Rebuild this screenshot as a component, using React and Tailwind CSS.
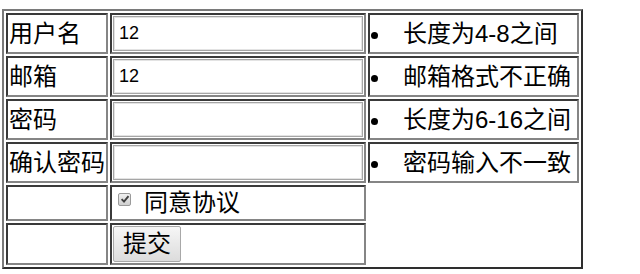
// App.jsx — registration form laid out as an old-style bordered table

const cell =
  "border-2 border-t-[#3a3a3a] border-l-[#3a3a3a] border-r-[#858585] border-b-[#858585] p-[1px] flex items-center"

function Label({ children }) {
  return <div className={`${cell} text-[24px] leading-[28px] whitespace-nowrap`}>{children}</div>
}

function Field({ value }) {
  return (
    <div className={cell}>
      <input
        type="text"
        defaultValue={value}
        className="w-full h-full border border-[#a6a6a6] shadow-[inset_0_0_0_1px_#e3e3e3] bg-white pl-[5px] text-[18px] font-['Liberation_Sans',sans-serif] text-black outline-none"
      />
    </div>
  )
}

function Hint({ children }) {
  return (
    <div className={`${cell} text-[24px] leading-[28px]`}>
      <span className="w-[7px] h-[7px] rounded-full bg-black shrink-0 mt-[3px]" />
      <span className="ml-[25px] whitespace-nowrap">{children}</span>
    </div>
  )
}

export default function App() {
  const rows = [
    { label: "用户名", value: "12", hint: "长度为4-8之间" },
    { label: "邮箱", value: "12", hint: "邮箱格式不正确" },
    { label: "密码", value: "", hint: "长度为6-16之间" },
    { label: "确认密码", value: "", hint: "密码输入不一致" },
  ]

  return (
    <div className="bg-white min-h-screen pt-[9px] pl-[2px] text-black font-['Liberation_Sans','Noto_Sans_CJK_SC',sans-serif]">
      <div className="inline-grid grid-cols-[102px_256px_211px] grid-rows-[41px_41px_41px_41px_36px_42px] gap-[2px] p-[2px] border-2 border-t-[#7a7a7a] border-l-[#7a7a7a] border-r-[#2e2e2e] border-b-[#2e2e2e]">
        {rows.map((r) => (
          <div key={r.label} className="contents">
            <Label>{r.label}</Label>
            <Field value={r.value} />
            <Hint>{r.hint}</Hint>
          </div>
        ))}

        <div className={cell} />
        <div className={`${cell} text-[24px] leading-[28px]`}>
          <span className="ml-[5px] mb-[8px] w-[13px] h-[13px] min-w-[13px] rounded-[2px] border border-[#9a9a9a] bg-gradient-to-b from-[#f0f0f0] to-[#cfcfcf] flex items-center justify-center shrink-0">
            <svg viewBox="0 0 10 10" className="w-[10px] h-[10px]">
              <path d="M1.6 5.2 L4 7.6 L8.5 2.2" fill="none" stroke="#3f3f3f" strokeWidth="1.9" />
            </svg>
          </span>
          <span className="ml-[13px]">同意协议</span>
        </div>
        <div />

        <div className={cell} />
        <div className={`${cell} items-stretch`}>
          <button
            type="button"
            className="px-[9px] border border-[#a8a8a8] rounded-[2px] bg-gradient-to-b from-[#f6f6f6] to-[#dcdcdc] text-[24px] leading-[28px] text-black"
          >
            提交
          </button>
        </div>
        <div />
      </div>
    </div>
  )
}
